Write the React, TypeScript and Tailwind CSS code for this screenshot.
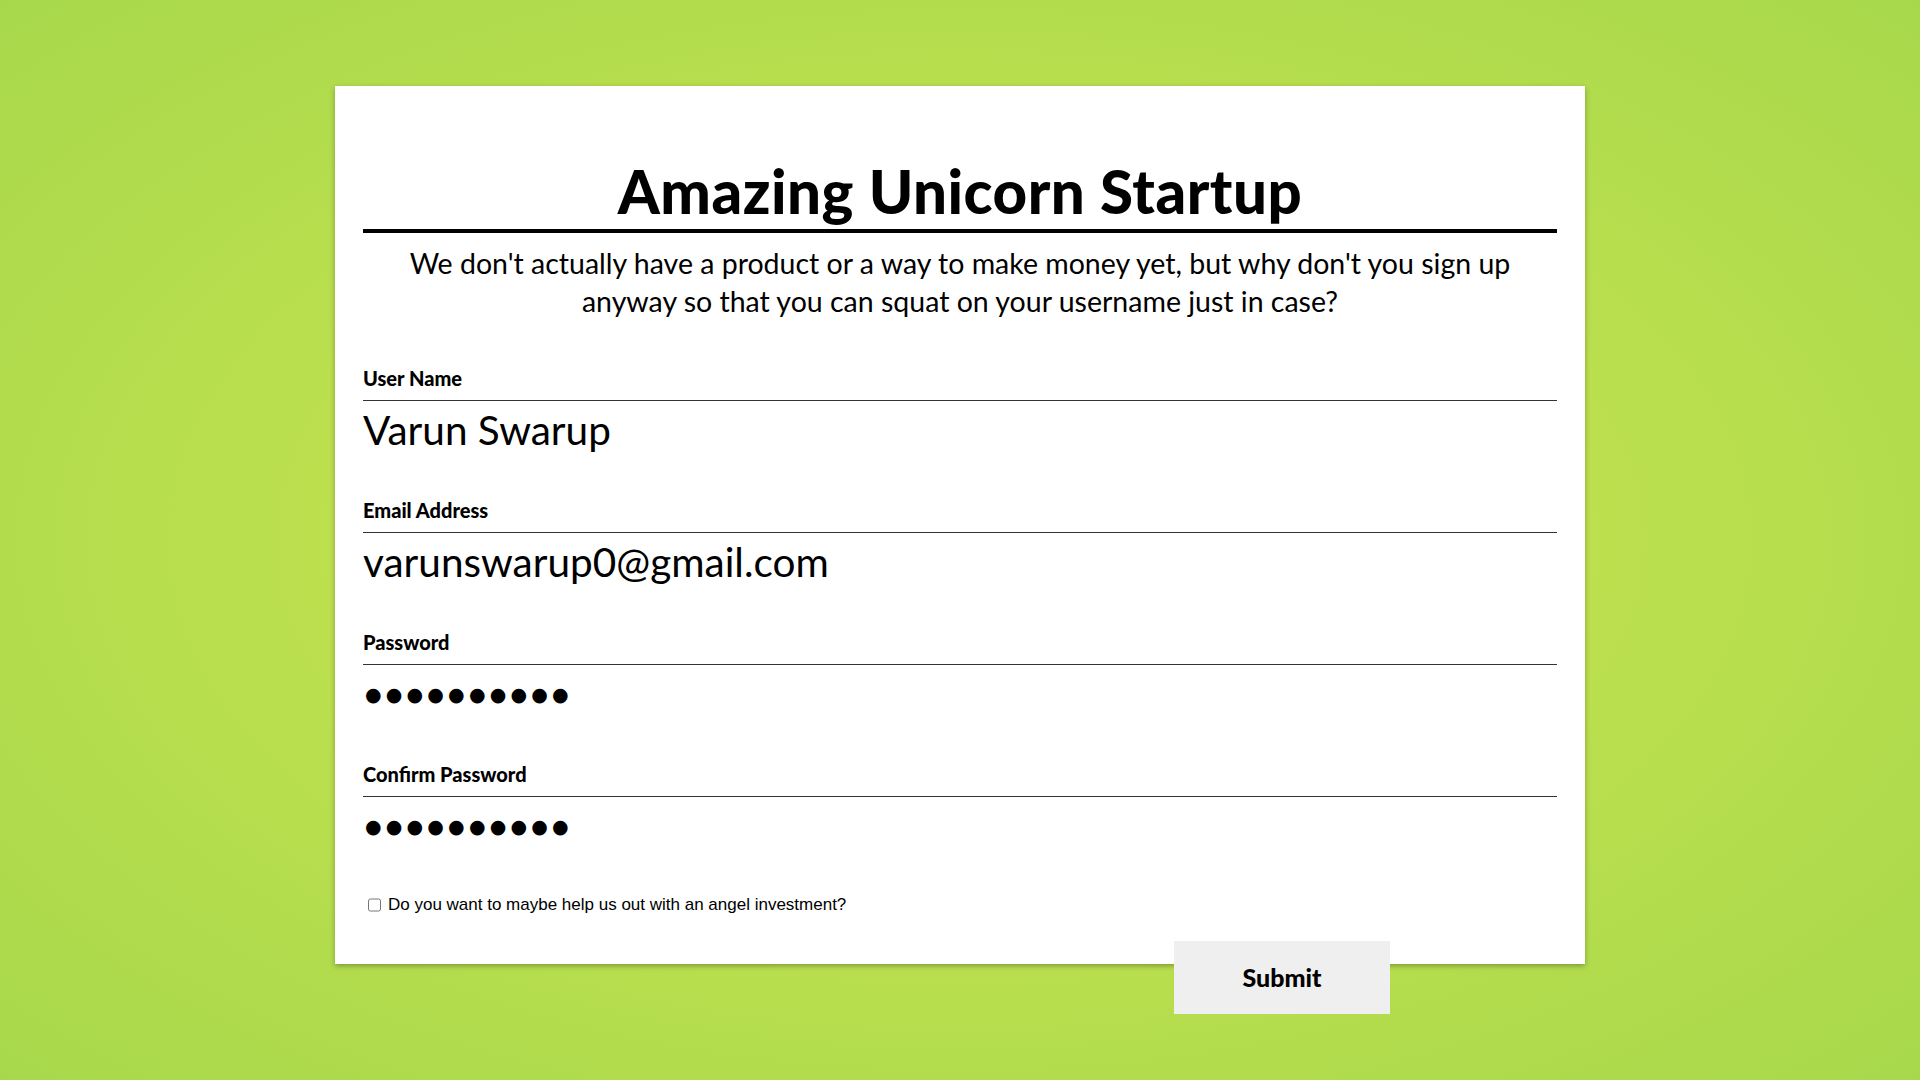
export default function App() {
  const fields = [
    { label: 'User Name', value: 'Varun Swarup', secret: false },
    { label: 'Email Address', value: 'varunswarup0@gmail.com', secret: false },
    { label: 'Password', value: '●●●●●●●●●●', secret: true },
    { label: 'Confirm Password', value: '●●●●●●●●●●', secret: true },
  ];

  return (
    <div
      className="min-h-screen w-full pt-[86px] bg-[radial-gradient(ellipse_at_center,#c9e852_0%,#bde04e_45%,#a7d84b_100%)]"
      style={{ fontFamily: 'Lato, "Noto Sans", sans-serif' }}
    >
      <div className="mx-auto w-[1250px] h-[878px] bg-white px-[28px] pt-[75px] text-black shadow-[0_2px_5px_rgba(0,0,0,0.3)]">
        {/* Title */}
        <h1 className="text-center text-[60px] leading-[60px] font-black tracking-[0.5px] pb-[8px] border-b-[4px] border-black">
          Amazing Unicorn Startup
        </h1>
        <p className="mx-auto mt-[11px] w-[1150px] text-center text-[28.5px] leading-[38px]">
          We don't actually have a product or a way to make money yet, but why don't you sign up anyway so that you can
          squat on your username just in case?
        </p>

        {/* Fields */}
        <div className="mt-[46px]">
          {fields.map((f) => (
            <div key={f.label} className="mb-[46px]">
              <div className="border-b border-[#333] pb-[10px]">
                <span className="block text-[20px] leading-[24px] font-black">{f.label}</span>
              </div>
              {f.secret ? (
                <div
                  className="mt-[7px] h-[44px] flex items-center pl-[2px] text-[19px] tracking-[4.2px]"
                  style={{ fontFamily: '"DejaVu Sans", sans-serif' }}
                >
                  {f.value}
                </div>
              ) : (
                <input
                  readOnly
                  defaultValue={f.value}
                  className="mt-[7px] block h-[44px] w-full border-0 p-0 text-[40.5px] leading-[44px] outline-none bg-transparent"
                />
              )}
            </div>
          ))}
        </div>

        {/* Checkbox */}
        <label className="flex items-center gap-[7px] pl-[5px]">
          <input type="checkbox" className="h-[14px] w-[13px] accent-gray-400" />
          <span
            className="text-[17px] leading-[22px]"
            style={{ fontFamily: '"Liberation Sans Narrow", "Liberation Sans", sans-serif' }}
          >
            Do you want to maybe help us out with an angel investment?
          </span>
        </label>

        {/* Submit */}
        <div className="mt-[25px] flex justify-end pr-[167px]">
          <button className="h-[73px] w-[216px] bg-[#efefef] text-[25px] font-black">Submit</button>
        </div>
      </div>
    </div>
  );
}
